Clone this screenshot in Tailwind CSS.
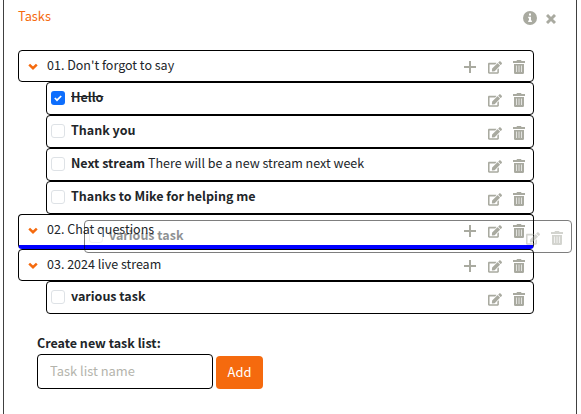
<!DOCTYPE html>
<html lang="en">
<head>
<meta charset="utf-8">
<title>Tasks</title>
<script src="https://cdn.jsdelivr.net/npm/@tailwindcss/browser@4"></script>
</head>
<body class="h-[414px] overflow-hidden bg-white font-['Noto_Sans_CJK_SC','Noto_Sans',sans-serif] text-[12.5px] leading-5 text-[#212529]">
<svg class="hidden">
  <symbol id="plus" viewBox="0 0 12 12"><path d="M6 0v12M0 6h12" stroke="currentColor" stroke-width="2" fill="none"/></symbol>
  <symbol id="edit" viewBox="0 0 576 512"><path fill="currentColor" d="M402.600 83.200l90.200 90.200c3.800 3.800 3.800 10 0 13.800L274.400 405.600l-92.800 10.300c-12.400 1.400-22.900-9.100-21.500-21.500l10.300-92.800L388.800 83.200c3.800-3.800 10-3.800 13.800 0zm162-22.900l-48.800-48.800c-15.200-15.200-39.900-15.200-55.200 0l-35.400 35.400c-3.800 3.800-3.800 10 0 13.800l90.200 90.200c3.800 3.800 10 3.800 13.800 0l35.400-35.400c15.200-15.300 15.200-40 0-55.200zM384 346.200V448H64V128h229.800c3.200 0 6.200-1.300 8.500-3.500l40-40c7.600-7.600 2.200-20.500-8.500-20.500H48C21.500 64 0 85.500 0 112v352c0 26.500 21.500 48 48 48h352c26.500 0 48-21.500 48-48V306.200c0-10.700-12.900-16-20.500-8.500l-40 40c-2.200 2.300-3.500 5.300-3.500 8.500z"/></symbol>
  <symbol id="trash" viewBox="0 0 12 14"><path fill="currentColor" d="M4 0h4l.5 1H12v2H0V1h3.500zM1 4h10v8.700A1.300 1.300 0 0 1 9.700 14H2.300A1.300 1.300 0 0 1 1 12.700z"/><path d="M3.500 5.500v6.500M6 5.500v6.500M8.500 5.500v6.500" stroke="#fff" stroke-opacity=".75" stroke-width=".9"/></symbol>
  <symbol id="chevron" viewBox="0 0 10 8"><path d="M1.200 1.700L5 5.200l3.800-3.500" fill="none" stroke="currentColor" stroke-width="2.500"/></symbol>
</svg>
<main class="relative ml-[3px] h-[414px] w-[574px] border-x border-[#404040]">
  <header class="flex h-[50px] items-start justify-between pl-[14px] pr-[20px] pt-[6px]">
    <h1 class="text-[12.800px] text-[#f56a0e]">Tasks</h1>
    <div class="mt-[5px] flex items-center gap-[9px] text-[#a9aaa0]">
      <svg class="size-[14px]" viewBox="0 0 14 14"><circle cx="7" cy="7" r="7" fill="currentColor"/><path d="M6 2.500h2v2H6zM5.200 5.800H8v3.700h.9V11H5.200V9.500H6V7.200h-.8z" fill="#fff"/></svg>
      <svg class="mt-[2px] size-[10px]" viewBox="0 0 10 10"><path d="M1 1l8 8M9 1L1 9" stroke="currentColor" stroke-width="2.900"/></svg>
    </div>
  </header>

  <div class="ml-[14px] w-[516px]">
    <section>
      <div class="flex h-8 items-center rounded border border-black pl-[9px] pr-2">
        <svg class="mt-[2px] h-2 w-[10px] text-[#f56a0e]"><use href="#chevron"/></svg>
        <span class="ml-[9px] -mt-[2px]">01. Don't forgot to say</span>
        <div class="ml-auto mt-[2px] flex items-center text-[#a9aaa0]"><svg class="size-3"><use href="#plus"/></svg><svg class="ml-3 h-[13px] w-[14px]"><use href="#edit"/></svg><svg class="ml-[11px] h-[14px] w-3"><use href="#trash"/></svg></div>
      </div>
      <ul class="ml-7">
        <li class="flex h-[33px] items-center rounded border border-black pb-px pl-1 pr-2">
          <span class="flex size-[14px] items-center justify-center rounded-[3px] bg-[#0d6efd]"><svg class="size-[10px]" viewBox="0 0 10 10"><path d="M1.800 5l2.200 2.200 4.200-4.200" fill="none" stroke="#fff" stroke-width="1.700"/></svg></span>
          <b class="ml-[6px] -mt-[2px] line-through">Hello</b>
          <div class="ml-auto mt-1 flex items-center text-[#a9aaa0]"><svg class="h-[13px] w-[14px]"><use href="#edit"/></svg><svg class="ml-[11px] h-[14px] w-3"><use href="#trash"/></svg></div>
        </li>
        <li class="flex h-[33px] items-center rounded border border-black pb-px pl-1 pr-2">
          <span class="size-[14px] rounded-[3px] border border-[#dee2e6]"></span>
          <b class="ml-[6px] -mt-[2px]">Thank you</b>
          <div class="ml-auto mt-1 flex items-center text-[#a9aaa0]"><svg class="h-[13px] w-[14px]"><use href="#edit"/></svg><svg class="ml-[11px] h-[14px] w-3"><use href="#trash"/></svg></div>
        </li>
        <li class="flex h-[33px] items-center rounded border border-black pb-px pl-1 pr-2">
          <span class="size-[14px] rounded-[3px] border border-[#dee2e6]"></span>
          <span class="ml-[6px] -mt-[2px]"><b>Next stream</b> There will be a new stream next week</span>
          <div class="ml-auto mt-1 flex items-center text-[#a9aaa0]"><svg class="h-[13px] w-[14px]"><use href="#edit"/></svg><svg class="ml-[11px] h-[14px] w-3"><use href="#trash"/></svg></div>
        </li>
        <li class="flex h-[33px] items-center rounded border border-black pb-px pl-1 pr-2">
          <span class="size-[14px] rounded-[3px] border border-[#dee2e6]"></span>
          <b class="ml-[6px] -mt-[2px]">Thanks to Mike for helping me</b>
          <div class="ml-auto mt-1 flex items-center text-[#a9aaa0]"><svg class="h-[13px] w-[14px]"><use href="#edit"/></svg><svg class="ml-[11px] h-[14px] w-3"><use href="#trash"/></svg></div>
        </li>
      </ul>
    </section>
    <section>
      <div class="flex h-[35px] items-center rounded border border-b-4 border-black border-b-[#0000ff] pl-[9px] pr-2">
        <svg class="mt-[2px] h-2 w-[10px] text-[#f56a0e]"><use href="#chevron"/></svg>
        <span class="ml-[9px] -mt-[2px]">02. Chat questions</span>
        <div class="ml-auto mt-[2px] flex items-center text-[#a9aaa0]"><svg class="size-3"><use href="#plus"/></svg><svg class="ml-3 h-[13px] w-[14px]"><use href="#edit"/></svg><svg class="ml-[11px] h-[14px] w-3"><use href="#trash"/></svg></div>
      </div>
    </section>
    <section>
      <div class="flex h-8 items-center rounded border border-black pl-[9px] pr-2">
        <svg class="mt-[2px] h-2 w-[10px] text-[#f56a0e]"><use href="#chevron"/></svg>
        <span class="ml-[9px] -mt-[2px]">03. 2024 live stream</span>
        <div class="ml-auto mt-[2px] flex items-center text-[#a9aaa0]"><svg class="size-3"><use href="#plus"/></svg><svg class="ml-3 h-[13px] w-[14px]"><use href="#edit"/></svg><svg class="ml-[11px] h-[14px] w-3"><use href="#trash"/></svg></div>
      </div>
      <ul class="ml-7">
        <li class="flex h-[33px] items-center rounded border border-black pb-px pl-1 pr-2">
          <span class="size-[14px] rounded-[3px] border border-[#dee2e6]"></span>
          <b class="ml-[6px] -mt-[2px]">various task</b>
          <div class="ml-auto mt-1 flex items-center text-[#a9aaa0]"><svg class="h-[13px] w-[14px]"><use href="#edit"/></svg><svg class="ml-[11px] h-[14px] w-3"><use href="#trash"/></svg></div>
        </li>
      </ul>
    </section>
  </div>

  <form class="ml-[33px] mt-[19px]">
    <label class="block font-bold" for="name">Create new task list:</label>
    <div class="mt-[1px] flex items-end gap-[3px]">
      <input id="name" class="h-[35px] w-[176px] rounded border border-black px-3 pb-[2px] text-[12.900px] placeholder:text-[#b4b4ac]" placeholder="Task list name">
      <button type="button" class="h-[33px] w-[47px] rounded bg-[#f56a0e] pb-px text-[12.900px] text-white">Add</button>
    </div>
  </form>

  <div class="absolute left-[80px] top-[220px] flex h-[33px] w-[488px] items-center rounded border border-black pb-px pl-1 pr-2 opacity-50">
    <span class="size-[14px] rounded-[3px] border border-[#dee2e6]"></span>
    <b class="ml-[6px] -mt-[2px]">various task</b>
    <div class="ml-auto mt-1 flex items-center text-[#a9aaa0]"><svg class="h-[13px] w-[14px]"><use href="#edit"/></svg><svg class="ml-[11px] h-[14px] w-3"><use href="#trash"/></svg></div>
  </div>
</main>
</body>
</html>
